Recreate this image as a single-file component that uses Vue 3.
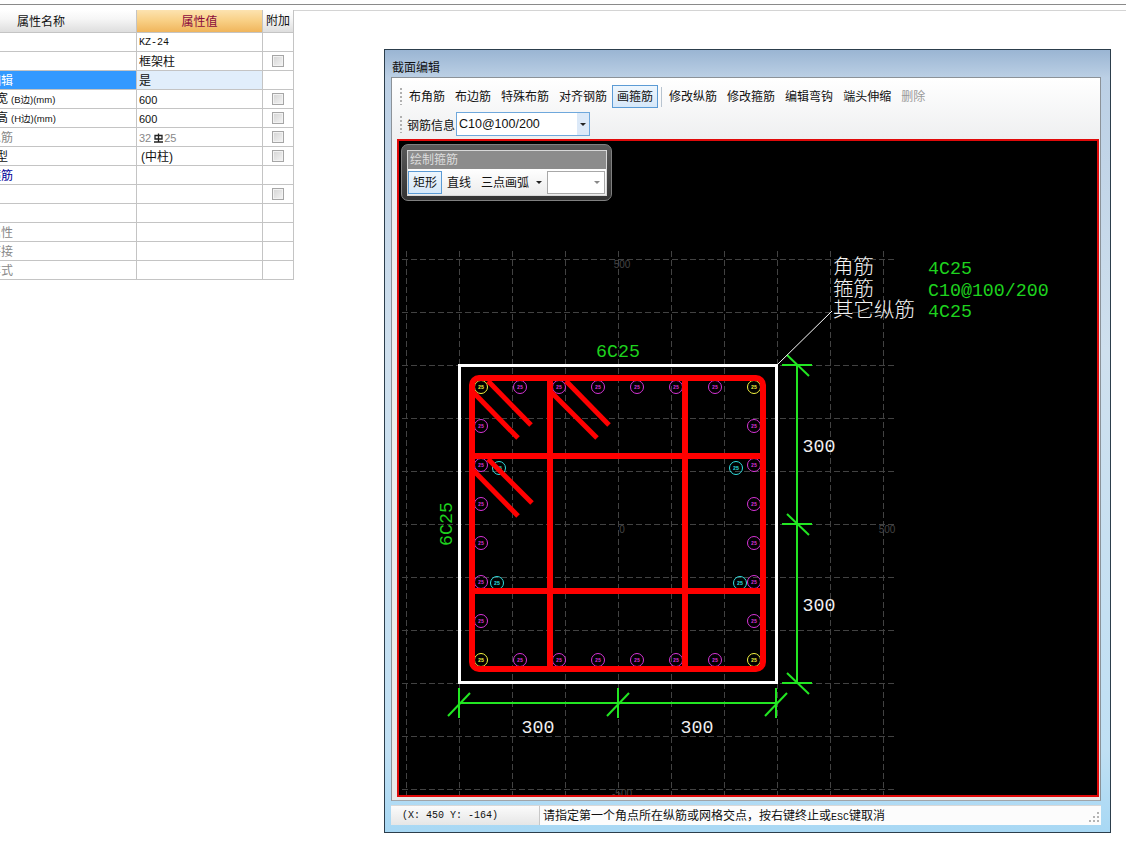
<template>
  <div class="page">
    <div class="top-rule"></div>
    <div class="main">
      <!-- 属性列表 -->
      <div class="prop-table">
        <div class="row head">
          <div class="cell name"><span class="head-title">属性名称</span></div>
          <div class="cell value">属性值</div>
          <div class="cell extra">附加</div>
        </div>
        <div v-for="row in rows" :key="row.name" class="row" :class="{ selected: row.selected }">
          <div class="cell name" :class="row.tone">
            <span :class="row.short ? 'clip-short' : 'clip'">{{ row.name }}<small v-if="row.unit">{{ row.unit }}</small></span>
          </div>
          <div class="cell value" :class="row.valueClass">
            <template v-if="row.steel">
              32<svg class="steel" width="9" height="10" viewBox="0 0 9 10"><path d="M4.5 0.5V8.5M1 2.5H8V6H1ZM0 9H9" fill="none" stroke="#222" stroke-width="1.3" /></svg>25
            </template>
            <template v-else>{{ row.value }}</template>
          </div>
          <div class="cell extra"><i v-if="row.check" class="check"></i></div>
        </div>
      </div>

      <!-- 截面编辑窗口 -->
      <div class="window">
        <div class="title">截面编辑</div>
        <div class="panel">
          <div class="toolbar">
            <div class="tool-row">
              <i class="grip"></i>
              <template v-for="tool in tools" :key="tool.label">
                <span class="tool" :class="{ active: tool.active, disabled: tool.disabled }">{{ tool.label }}</span>
                <i v-if="tool.active" class="sep"></i>
              </template>
            </div>
            <div class="tool-row second">
              <i class="grip"></i>
              <span class="info-label">钢筋信息</span>
              <div class="combo">
                <span class="combo-text">C10@100/200</span>
                <span class="combo-btn"><i class="arrow"></i></span>
              </div>
            </div>
          </div>

          <div class="canvas">
            <svg class="drawing" width="698" height="654" viewBox="399 142 698 654">
              <!-- 网格 -->
              <line v-for="y in gridY" :key="'h' + y" x1="402" x2="894" :y1="y" :y2="y" class="grid" />
              <line v-for="x in gridX" :key="'v' + x" :x1="x" :x2="x" y1="252" y2="798" class="grid" />
              <text x="622" y="269" class="axis">500</text>
              <text x="622" y="534" class="axis">0</text>
              <text x="887" y="534" class="axis">500</text>
              <text x="622" y="798" class="axis">-500</text>

              <rect x="459.5" y="366.5" width="317" height="317" class="outline" />

              <!-- 纵筋 -->
              <g v-for="bar in bars" :key="bar.x + '-' + bar.y">
                <circle :cx="bar.x" :cy="bar.y" r="6.5" fill="none" :stroke="bar.color" />
                <text :x="bar.x" :y="bar.y + 2" class="bar-text" :fill="bar.color">25</text>
              </g>

              <!-- 箍筋 -->
              <rect x="472" y="379" width="291" height="291" rx="7" class="hoop" />
              <line x1="550" x2="550" y1="379" y2="670" class="hoop" />
              <line x1="685" x2="685" y1="379" y2="670" class="hoop" />
              <line x1="472" x2="763" y1="457" y2="457" class="hoop" />
              <line x1="472" x2="763" y1="592" y2="592" class="hoop" />
              <line v-for="(h, i) in hooks" :key="i" :x1="h[0]" :y1="h[1]" :x2="h[2]" :y2="h[3]" class="hook" />

              <!-- 标注 -->
              <line x1="459" x2="777" y1="704" y2="704" class="dim" />
              <line x1="797" x2="797" y1="366" y2="684" class="dim" />
              <g v-for="x in [459, 618, 776]" :key="'tx' + x">
                <line :x1="x" :x2="x" y1="689" y2="719" class="dim" />
                <line :x1="x - 11" y1="717" :x2="x + 11" y2="694" class="dim" />
              </g>
              <g v-for="y in [366, 525, 684]" :key="'ty' + y">
                <line x1="782" x2="812" :y1="y" :y2="y" class="dim" />
                <line x1="787" :y1="y - 10" x2="809" :y2="y + 11" class="dim" />
              </g>
              <text x="538" y="734" class="num mid">300</text>
              <text x="697" y="734" class="num mid">300</text>
              <text x="819" y="453" class="num mid">300</text>
              <text x="819" y="612" class="num mid">300</text>
              <text x="618" y="358" class="num mid green">6C25</text>
              <text x="445" y="532" class="num mid green" transform="rotate(-90 445 525)">6C25</text>

              <line x1="777" y1="366" x2="832" y2="312" stroke="#fff" />
              <text x="833" y="275" class="cjk">角筋</text>
              <text x="833" y="297" class="cjk">箍筋</text>
              <text x="833" y="318" class="cjk">其它纵筋</text>
              <text x="928" y="275" class="num green">4C25</text>
              <text x="928" y="297" class="num green">C10@100/200</text>
              <text x="928" y="318" class="num green">4C25</text>
            </svg>

            <!-- 绘制箍筋浮动条 -->
            <div class="float-bar">
              <div class="float-inner">
                <div class="float-head">绘制箍筋</div>
                <div class="float-body">
                  <span class="tool active">矩形</span>
                  <span class="tool">直线</span>
                  <span class="tool">三点画弧</span>
                  <i class="arrow float-arrow"></i>
                  <div class="float-combo"><i class="arrow gray"></i></div>
                </div>
              </div>
            </div>
          </div>
        </div>

        <div class="status">
          <div class="coord">(X: 450 Y: -164)</div>
          <div class="hint">请指定第一个角点所在纵筋或网格交点，按右键终止或<span class="esc">ESC</span>键取消</div>
          <svg class="resize" width="14" height="14" viewBox="0 0 14 14" fill="#b4b4b4">
            <rect x="10" y="2" width="2" height="2" />
            <rect x="6" y="6" width="2" height="2" /><rect x="10" y="6" width="2" height="2" />
            <rect x="2" y="10" width="2" height="2" /><rect x="6" y="10" width="2" height="2" /><rect x="10" y="10" width="2" height="2" />
          </svg>
        </div>
      </div>
    </div>
  </div>
</template>

<script setup>
const rows = [
  { name: '名称', value: 'KZ-24', valueClass: 'latin' },
  { name: '类别', value: '框架柱', check: true },
  { name: '截面编辑', value: '是', selected: true },
  { name: '截面宽', unit: '(B边)(mm)', short: true, value: '600', valueClass: 'sans', check: true },
  { name: '截面高', unit: '(H边)(mm)', short: true, value: '600', valueClass: 'sans', check: true },
  { name: '全部纵筋', tone: 'gray', steel: true, valueClass: 'sans muted', check: true },
  { name: '柱类型', short: true, value: '(中柱)', valueClass: 'inset', check: true },
  { name: '其它箍筋', tone: 'blue' },
  { name: '备注', check: true },
  { name: '属性' },
  { name: '其它属性', tone: 'gray' },
  { name: '锚固搭接', tone: 'gray' },
  { name: '显示样式', tone: 'gray' }
]

const tools = [
  { label: '布角筋' },
  { label: '布边筋' },
  { label: '特殊布筋' },
  { label: '对齐钢筋' },
  { label: '画箍筋', active: true },
  { label: '修改纵筋' },
  { label: '修改箍筋' },
  { label: '编辑弯钩' },
  { label: '端头伸缩' },
  { label: '删除', disabled: true }
]

const gridX = [406, 459, 512, 565, 618, 671, 724, 777, 830, 883]
const gridY = [260, 313, 366, 419, 472, 525, 578, 631, 684, 737, 790]

const colX = [481, 520, 559, 598, 637, 676, 715, 754]
const colY = [388, 427, 466, 505, 544, 583, 622, 661]
const bars = []
colX.forEach((x, i) => {
  const corner = i === 0 || i === 7
  bars.push({ x, y: 388, color: corner ? '#f4f440' : '#d834d8' })
  bars.push({ x, y: 661, color: corner ? '#f4f440' : '#d834d8' })
})
colY.slice(1, 7).forEach((y) => {
  bars.push({ x: 481, y, color: '#d834d8' })
  bars.push({ x: 754, y, color: '#d834d8' })
})
bars.push({ x: 499, y: 469, color: '#30e0e0' })
bars.push({ x: 736, y: 469, color: '#30e0e0' })
bars.push({ x: 497, y: 584, color: '#30e0e0' })
bars.push({ x: 740, y: 584, color: '#30e0e0' })

const hooks = [
  [473, 393, 518, 439],
  [488, 382, 531, 426],
  [551, 393, 597, 439],
  [566, 382, 609, 426],
  [473, 471, 518, 517],
  [488, 460, 532, 504]
]
</script>

<style>
html,
body {
  margin: 0;
  background: #fff;
}
</style>

<style scoped>
* {
  box-sizing: border-box;
}

.page {
  width: 1126px;
  height: 850px;
  overflow: hidden;
  background: #fff;
  font-family: "Liberation Sans", "Noto Sans CJK SC", sans-serif;
  font-size: 12px;
  color: #111;
}

.top-rule {
  height: 10px;
  padding-top: 4px;
}

.top-rule::before {
  content: "";
  display: block;
  height: 5px;
  border-top: 1px solid #8a8a8a;
  border-bottom: 1px solid #d4d4d4;
}

.main {
  display: flex;
  align-items: flex-start;
}

/* 属性列表 */
.prop-table {
  width: 294px;
  flex: none;
}

.row {
  display: grid;
  grid-template-columns: 137px 126px 31px;
  height: 19px;
}

.row.head {
  height: 23px;
}

.cell {
  display: flex;
  align-items: center;
  overflow: hidden;
  white-space: nowrap;
  padding-top: 1px;
  border-right: 1px solid #c4c4c4;
  border-bottom: 1px solid #c4c4c4;
  line-height: 18px;
}

.clip {
  margin-left: -35px;
}

.clip-short {
  margin-left: -28px;
}

.clip small,
.clip-short small {
  font-size: 9.5px;
  margin-left: 3px;
}

.cell.value {
  padding-left: 2px;
}

.cell.latin {
  font-family: "Liberation Mono", monospace;
  font-size: 10px;
}

.cell.sans {
  font-size: 11px;
}

.cell.inset {
  padding-left: 4px;
}

.cell.muted {
  color: #888;
}

.steel {
  margin: 0 1px 0 3px;
}

.cell.gray {
  color: #888;
}

.cell.blue {
  color: #000099;
}

.cell.extra {
  justify-content: center;
  padding-top: 0;
}

.head .cell {
  font-size: 12px;
  background: linear-gradient(#ffffff, #f6f6f6 40%, #dedede);
}

.head .name {
  padding-left: 17px;
}

.head .value {
  justify-content: center;
  padding-left: 0;
  color: #8a0a3c;
  background: linear-gradient(#fde3b0, #f8cf84 50%, #f0b55c);
}

.selected .name {
  background: #3399ff;
  color: #fff;
}

.selected .value {
  background: #e1eefb;
}

.check {
  display: block;
  width: 12px;
  height: 12px;
  border: 1px solid #a6a6a6;
  background: linear-gradient(135deg, #d4d4d4, #f4f4f4);
  box-shadow: inset 0 0 0 1px #f2f2f2;
}

/* 窗口 */
.window {
  width: 727px;
  height: 784px;
  margin: 39px 0 0 90px;
  padding: 0 9px 0 6px;
  display: flex;
  flex-direction: column;
  border: 1px solid #2c3e4c;
  background: linear-gradient(#9ab5d3, #bcd0e5 28px, #cfe0ee 300px, #c0e0f4 700px, #a8d8f4);
}

.title {
  height: 27px;
  padding: 9px 0 0 1px;
  line-height: 18px;
  flex: none;
}

.panel {
  height: 724px;
  padding: 0 1px 0 5px;
  flex: none;
  border: 1px solid #8c9298;
  border-bottom-color: #a0a4a8;
  background: linear-gradient(#ffffff, #eeeff0 62px, #e8e8e8);
}

.toolbar {
  height: 61px;
  margin-left: -5px;
  padding-top: 7px;
}

.tool-row {
  display: flex;
  align-items: center;
  height: 23px;
  padding-left: 8px;
}

.tool-row.second {
  height: 24px;
  margin-top: 4px;
}

.grip {
  width: 3px;
  height: 17px;
  margin-right: 1px;
  flex: none;
  background: repeating-linear-gradient(#b0b0b0 0 2px, transparent 2px 4px);
  background-size: 2px 100%;
  background-repeat: no-repeat;
}

.tool {
  height: 23px;
  padding: 0 4px;
  flex: none;
  line-height: 23px;
  border: 1px solid transparent;
}

.tool.active {
  border-color: #5b9bd5;
  background: linear-gradient(#eef6fd, #d6e8f9);
}

.tool.disabled {
  color: #999;
}

.sep {
  width: 1px;
  height: 20px;
  margin: 0 2px 0 3px;
  background: #b8c4d0;
}

.info-label {
  margin-left: 3px;
  width: 49px;
  padding-top: 1px;
}

.combo {
  display: flex;
  width: 134px;
  height: 24px;
  border: 1px solid #6fa8dc;
  background: #fff;
}

.combo-text {
  flex: 1;
  padding-left: 2px;
  font-size: 12.5px;
  line-height: 23px;
}

.combo-btn {
  width: 12px;
  display: flex;
  align-items: center;
  justify-content: center;
  background: #dce9f8;
}

.arrow {
  display: block;
  width: 0;
  height: 0;
  border-left: 3px solid transparent;
  border-right: 3px solid transparent;
  border-top: 3px solid #222;
}

.arrow.gray {
  border-top-color: #888;
}

/* 绘图区 */
.canvas {
  position: relative;
  width: 702px;
  height: 658px;
  border: 2px solid #e00a0a;
  background: #000;
  overflow: hidden;
}

.drawing {
  display: block;
}

.grid {
  stroke: #424242;
  stroke-dasharray: 6 3;
  shape-rendering: crispEdges;
}

.axis {
  fill: #444;
  font-family: "Liberation Sans", sans-serif;
  font-size: 10px;
  text-anchor: middle;
}

.outline {
  fill: none;
  stroke: #fff;
  stroke-width: 3;
}

.hoop {
  fill: none;
  stroke: #ff0000;
  stroke-width: 6;
}

.hook {
  stroke: #ff0000;
  stroke-width: 5;
}

.bar-text {
  font-family: "Liberation Mono", monospace;
  font-size: 5px;
  font-weight: bold;
  text-anchor: middle;
}

.dim {
  stroke: #22e622;
  stroke-width: 2;
}

.num {
  fill: #f0f0f0;
  font-family: "Liberation Mono", monospace;
  font-size: 18.3px;
}

.mid {
  text-anchor: middle;
}

.green {
  fill: #1ed21e;
}

.cjk {
  fill: #f4f4f4;
  font-family: "Noto Sans CJK SC", sans-serif;
  font-size: 20.5px;
  font-weight: 300;
}

.float-bar {
  position: absolute;
  left: 2px;
  top: 3px;
  width: 211px;
  height: 57px;
  padding: 5px 4px 4px 5px;
  border: 1px solid #808080;
  border-radius: 7px;
  background: linear-gradient(#5a5a5a, #333);
}

.float-inner {
  width: 200px;
  height: 46px;
  border: 1px solid #d8d8d8;
}

.float-head {
  height: 18px;
  padding-left: 2px;
  background: #8c8c8c;
  color: #dcdcdc;
  line-height: 18px;
}

.float-body {
  display: flex;
  align-items: center;
  height: 26px;
  background: linear-gradient(#ffffff, #ececec);
}

.float-arrow {
  margin: 0 5px 0 2px;
}

.float-combo {
  display: flex;
  align-items: center;
  justify-content: flex-end;
  width: 58px;
  height: 23px;
  padding-right: 4px;
  border: 1px solid #a8a8a8;
  background: #fff;
}

/* 状态栏 */
.status {
  position: relative;
  display: flex;
  height: 20px;
  margin-top: 4px;
  flex: none;
  background: linear-gradient(#fbfbfb, #e6e6e6);
  border-top: 1px solid #d8d8d8;
  line-height: 20px;
}

.coord {
  width: 149px;
  padding-left: 11px;
  border-right: 1px solid #c8c8c8;
  font-family: "Liberation Mono", monospace;
  font-size: 10px;
}

.hint {
  padding-left: 3px;
  background: #fcfcfc;
  flex: 1;
}

.esc {
  font-family: "Liberation Mono", monospace;
  font-size: 10px;
}

.resize {
  position: absolute;
  right: 0;
  bottom: 1px;
}
</style>
